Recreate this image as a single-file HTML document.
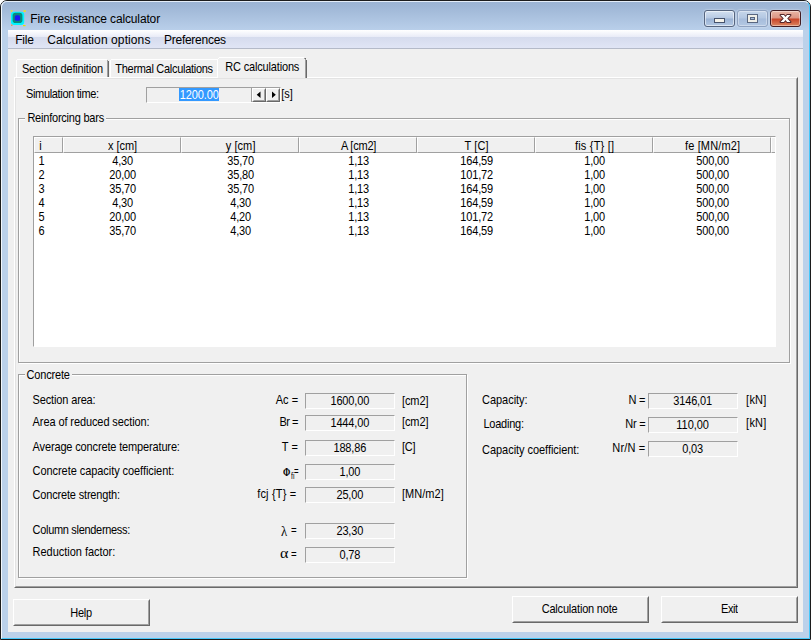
<!DOCTYPE html>
<html><head><meta charset="utf-8"><title>Fire resistance calculator</title>
<style>
*{box-sizing:border-box;margin:0;padding:0}
html,body{width:811px;height:640px;overflow:hidden;background:#fff}
body{position:relative;font-family:"Liberation Sans",sans-serif;font-size:11px;color:#000}
.a{position:absolute;white-space:pre}
#frame{left:0;top:0;width:811px;height:640px;background:#bbd1ea;border:1px solid #1c1c1c;border-radius:7px 7px 0 0}
#tbar{left:1px;top:1px;width:809px;height:29px;background:linear-gradient(to bottom,#9bb3d3 0,#9fb7d6 20%,#b9cfea 100%);border-radius:6px 6px 0 0}
#frame2{left:1px;top:1px;width:809px;height:638px;border:1px solid;border-color:#e4edf8 #45c8fb #45c8fb #f2f7fc;border-radius:6px 6px 0 0}
#client{left:8px;top:30px;width:795px;height:602px;background:#f0f0f0}
#menubar{left:8px;top:30px;width:795px;height:19px;background:linear-gradient(to bottom,#ffffff 0,#e8ebf7 7px,#d5dbed 7px,#e0e5f5 18px,#b4bac8 18px,#b4bac8 19px)}
.seg{font-size:12px;line-height:14px;height:14px}
.t{line-height:13px;height:13px;transform:scaleY(1.09);transform-origin:0 10px}
.box{border:1px solid;border-color:#a0a0a0 #fff #fff #a0a0a0;background:#f0f0f0;height:16px}
.btn{border:1px solid;border-color:#fff #696969 #696969 #fff;background:#f0f0f0}
.btn:after{content:"";position:absolute;left:0;top:0;right:0;bottom:0;border:1px solid;border-color:#f0f0f0 #a0a0a0 #a0a0a0 #f0f0f0}
.hd{top:137px;height:16px;background:#f0f0f0;border:1px solid;border-color:#fff #a0a0a0 #a0a0a0 #fff}
.grp{border:1px solid #a0a0a0;box-shadow:1px 1px 0 #fff, inset 1px 1px 0 #fff}
.cap{border-radius:3px;height:17px;top:10px}
.sym{font-family:"Liberation Serif","DejaVu Serif",serif;font-size:12px}
</style></head><body>
<div id="frame" class="a"></div>
<div id="tbar" class="a"></div>
<div id="frame2" class="a"></div>
<div id="client" class="a"></div>
<div id="menubar" class="a"></div>

<svg class="a" style="left:10px;top:10px" width="17" height="17" viewBox="0 0 17 17"><rect x="1" y="1.700" width="13.200" height="13.300" rx="3" fill="#00f4ff"/><rect x="2.600" y="2.800" width="9.800" height="10.300" rx="2.800" fill="#0b8a7c"/><rect x="4.800" y="5.300" width="5.300" height="5.500" rx="1.600" fill="#1a1af4"/><rect x="0.800" y="0.300" width="1.600" height="1.300" fill="#f4e800"/><rect x="13.500" y="0.300" width="2.300" height="1.500" fill="#f4e800"/><rect x="13" y="15" width="2.500" height="1.200" fill="#e8dc00"/><rect x="1" y="14.500" width="1.500" height="1.500" fill="#d8a060"/></svg>
<div class="a seg" style="left:30.30px;top:12px;letter-spacing:-0.142px">Fire resistance calculator</div>
<div class="a seg" style="left:15.20px;top:33px;letter-spacing:-0.186px">File</div>
<div class="a seg" style="left:47.20px;top:33px;letter-spacing:0.100px">Calculation options</div>
<div class="a seg" style="left:164.00px;top:33px;letter-spacing:-0.264px">Preferences</div>
<div class="a cap" style="left:704px;width:31px;border:1px solid #56657f;background:linear-gradient(#d3e0f0,#b6c9e3 48%,#9ab2d4 52%,#b3c8e3);box-shadow:inset 0 0 0 1px rgba(255,255,255,.55),0 0 2px rgba(255,255,255,.7)"></div>
<div class="a cap" style="left:737px;width:31px;border:1px solid #8fa2c0;background:linear-gradient(#c6d6ea,#b3c7e2 48%,#a6bcdb 52%,#b3c8e3);box-shadow:inset 0 0 0 1px rgba(255,255,255,.35),0 0 2px rgba(255,255,255,.7)"></div>
<div class="a cap" style="left:770px;width:31px;border:1px solid #431c22;background:linear-gradient(#e9b5a6,#dc9584 46%,#c8452a 54%,#dc8560);box-shadow:inset 0 0 0 1px rgba(255,255,255,.4),0 0 2px rgba(255,255,255,.7)"></div>
<svg class="a" style="left:704px;top:10px" width="98" height="17" viewBox="0 0 98 17"><rect x="10.500" y="8.500" width="10" height="4" fill="#f4f2ea" stroke="#46526c"/><rect x="43.500" y="4.500" width="10" height="8" fill="#f0efe8" stroke="#5a6780"/><rect x="46.500" y="7.500" width="4" height="2" fill="#a9bedb" stroke="#5a6780"/><path d="M76.500 5h3.400l1.600 2.100 1.600-2.100h3.400l-3.300 3.500 3.300 3.500h-3.400l-1.600-2.100-1.600 2.100h-3.400l3.300-3.500z" fill="#fff" stroke="#56262a" stroke-width="1.900" stroke-linejoin="round" paint-order="stroke"/></svg>
<div class="a" style="left:14px;top:77px;width:784px;height:511px;border:1px solid;border-color:#fff #696969 #696969 #fff"></div>
<div class="a" style="left:15px;top:78px;width:782px;height:509px;border:1px solid;border-color:#e3e3e3 #a0a0a0 #a0a0a0 #e3e3e3"></div>
<div class="a" style="left:16px;top:60px;width:1px;height:17px;background:#fff"></div>
<div class="a" style="left:17px;top:59px;width:90px;height:1px;background:#fff"></div>
<div class="a" style="left:107px;top:60px;width:1px;height:17px;background:#a0a0a0"></div>
<div class="a" style="left:108px;top:61px;width:1px;height:16px;background:#696969"></div>
<div class="a" style="left:110px;top:60px;width:1px;height:17px;background:#fff"></div>
<div class="a" style="left:111px;top:59px;width:106px;height:1px;background:#fff"></div>
<div class="a" style="left:217px;top:57px;width:90px;height:21px;background:#f0f0f0"></div>
<div class="a" style="left:217px;top:59px;width:1px;height:19px;background:#fff"></div>
<div class="a" style="left:218px;top:58px;width:1px;height:1px;background:#fff"></div>
<div class="a" style="left:219px;top:57px;width:85px;height:1px;background:#fff"></div>
<div class="a" style="left:305px;top:59px;width:1px;height:19px;background:#a0a0a0"></div>
<div class="a" style="left:306px;top:60px;width:1px;height:18px;background:#696969"></div>
<div class="a" style="left:304px;top:58px;width:1px;height:1px;background:#a0a0a0"></div>
<div class="a" style="left:305px;top:58px;width:1px;height:1px;background:#696969"></div>
<div class="a t" style="left:21.90px;top:62.5px;letter-spacing:-0.149px">Section definition</div>
<div class="a t" style="left:115.30px;top:62.5px;letter-spacing:-0.291px">Thermal Calculations</div>
<div class="a t" style="left:225.20px;top:61px;letter-spacing:-0.161px">RC calculations</div>
<div class="a t" style="left:26.00px;top:88px;letter-spacing:-0.342px">Simulation time:</div>
<div class="a box" style="left:146px;top:87px;width:135px;height:16px"></div>
<div class="a" style="left:251px;top:88px;width:1px;height:14px;background:#a0a0a0"></div>
<div class="a" style="left:179px;top:88px;background:#3399ff;width:40px;height:13px"></div>
<div class="a t" style="left:179.80px;top:89px;letter-spacing:-0.109px;color:#fff">1200.00</div>
<div class="a btn" style="left:252px;top:88px;width:14px;height:14px"></div>
<div class="a btn" style="left:266px;top:88px;width:14px;height:14px"></div>
<svg class="a" style="left:251px;top:87px" width="29" height="15" viewBox="0 0 29 15"><path d="M9.500 4.500v6.400l-3.800-3.200z M21 4.500v6.400l3.800-3.200z" fill="#000"/></svg>
<div class="a t" style="left:281.30px;top:88px;letter-spacing:-0.108px">[s]</div>
<div class="a grp" style="left:18px;top:118px;width:772px;height:245px"></div>
<div class="a" style="left:25px;top:116px;width:81px;height:6px;background:#f0f0f0"></div>
<div class="a t" style="left:27.40px;top:112px;letter-spacing:-0.218px">Reinforcing bars</div>
<div class="a" style="left:33px;top:136px;width:743px;height:211px;background:#fff;border:1px solid;border-color:#a0a0a0 #fff #fff #a0a0a0"></div>
<div class="a hd" style="left:34px;width:29px"></div>
<div class="a hd" style="left:63px;width:118px"></div>
<div class="a hd" style="left:181px;width:118px"></div>
<div class="a hd" style="left:299px;width:118px"></div>
<div class="a hd" style="left:417px;width:118px"></div>
<div class="a hd" style="left:535px;width:118px"></div>
<div class="a hd" style="left:653px;width:118px"></div>
<div class="a hd" style="left:771px;width:4px;border-right:0"></div>
<div class="a t" style="left:39.20px;top:140px;letter-spacing:0.147px">i</div>
<div class="a t" style="left:108.05px;top:140px;letter-spacing:-0.041px">x [cm]</div>
<div class="a t" style="left:225.65px;top:140px;letter-spacing:0.093px">y [cm]</div>
<div class="a t" style="left:340.95px;top:140px;letter-spacing:-0.198px">A [cm2]</div>
<div class="a t" style="left:464.40px;top:140px;letter-spacing:0.152px">T [C]</div>
<div class="a t" style="left:574.95px;top:140px;letter-spacing:0.200px">fis {T} []</div>
<div class="a t" style="left:685.00px;top:140px;letter-spacing:0.140px">fe [MN/m2]</div>
<div class="a t" style="left:38.40px;top:155px;letter-spacing:-0.125px">1</div>
<div class="a t" style="left:112.25px;top:155px;letter-spacing:-0.180px">4,30</div>
<div class="a t" style="left:227.25px;top:155px;letter-spacing:-0.166px">35,70</div>
<div class="a t" style="left:348.25px;top:155px;letter-spacing:-0.180px">1,13</div>
<div class="a t" style="left:460.25px;top:155px;letter-spacing:-0.159px">164,59</div>
<div class="a t" style="left:584.25px;top:155px;letter-spacing:-0.180px">1,00</div>
<div class="a t" style="left:696.25px;top:155px;letter-spacing:-0.159px">500,00</div>
<div class="a t" style="left:38.40px;top:169px;letter-spacing:-0.125px">2</div>
<div class="a t" style="left:109.25px;top:169px;letter-spacing:-0.166px">20,00</div>
<div class="a t" style="left:227.25px;top:169px;letter-spacing:-0.166px">35,80</div>
<div class="a t" style="left:348.25px;top:169px;letter-spacing:-0.180px">1,13</div>
<div class="a t" style="left:460.25px;top:169px;letter-spacing:-0.159px">101,72</div>
<div class="a t" style="left:584.25px;top:169px;letter-spacing:-0.180px">1,00</div>
<div class="a t" style="left:696.25px;top:169px;letter-spacing:-0.159px">500,00</div>
<div class="a t" style="left:38.40px;top:183px;letter-spacing:-0.125px">3</div>
<div class="a t" style="left:109.25px;top:183px;letter-spacing:-0.166px">35,70</div>
<div class="a t" style="left:227.25px;top:183px;letter-spacing:-0.166px">35,70</div>
<div class="a t" style="left:348.25px;top:183px;letter-spacing:-0.180px">1,13</div>
<div class="a t" style="left:460.25px;top:183px;letter-spacing:-0.159px">164,59</div>
<div class="a t" style="left:584.25px;top:183px;letter-spacing:-0.180px">1,00</div>
<div class="a t" style="left:696.25px;top:183px;letter-spacing:-0.159px">500,00</div>
<div class="a t" style="left:38.40px;top:197px;letter-spacing:-0.125px">4</div>
<div class="a t" style="left:112.25px;top:197px;letter-spacing:-0.180px">4,30</div>
<div class="a t" style="left:230.25px;top:197px;letter-spacing:-0.180px">4,30</div>
<div class="a t" style="left:348.25px;top:197px;letter-spacing:-0.180px">1,13</div>
<div class="a t" style="left:460.25px;top:197px;letter-spacing:-0.159px">164,59</div>
<div class="a t" style="left:584.25px;top:197px;letter-spacing:-0.180px">1,00</div>
<div class="a t" style="left:696.25px;top:197px;letter-spacing:-0.159px">500,00</div>
<div class="a t" style="left:38.40px;top:211px;letter-spacing:-0.125px">5</div>
<div class="a t" style="left:109.25px;top:211px;letter-spacing:-0.166px">20,00</div>
<div class="a t" style="left:230.25px;top:211px;letter-spacing:-0.180px">4,20</div>
<div class="a t" style="left:348.25px;top:211px;letter-spacing:-0.180px">1,13</div>
<div class="a t" style="left:460.25px;top:211px;letter-spacing:-0.159px">101,72</div>
<div class="a t" style="left:584.25px;top:211px;letter-spacing:-0.180px">1,00</div>
<div class="a t" style="left:696.25px;top:211px;letter-spacing:-0.159px">500,00</div>
<div class="a t" style="left:38.40px;top:225px;letter-spacing:-0.125px">6</div>
<div class="a t" style="left:109.25px;top:225px;letter-spacing:-0.166px">35,70</div>
<div class="a t" style="left:230.25px;top:225px;letter-spacing:-0.180px">4,30</div>
<div class="a t" style="left:348.25px;top:225px;letter-spacing:-0.180px">1,13</div>
<div class="a t" style="left:460.25px;top:225px;letter-spacing:-0.159px">164,59</div>
<div class="a t" style="left:584.25px;top:225px;letter-spacing:-0.180px">1,00</div>
<div class="a t" style="left:696.25px;top:225px;letter-spacing:-0.159px">500,00</div>
<div class="a grp" style="left:18px;top:374px;width:449px;height:204px"></div>
<div class="a" style="left:25px;top:372px;width:47px;height:6px;background:#f0f0f0"></div>
<div class="a t" style="left:26.60px;top:369px;letter-spacing:-0.180px">Concrete</div>
<div class="a t" style="left:32.60px;top:394px;letter-spacing:-0.148px">Section area:</div>
<div class="a box" style="left:305px;top:393px;width:90px"></div>
<div class="a t" style="left:330.45px;top:395px;letter-spacing:-0.152px">1600,00</div>
<div class="a t" style="left:275.70px;top:394px;letter-spacing:0.018px">Ac =</div>
<div class="a t" style="left:402.00px;top:395px;letter-spacing:-0.101px">[cm2]</div>
<div class="a t" style="left:32.60px;top:416px;letter-spacing:-0.098px">Area of reduced section:</div>
<div class="a box" style="left:305px;top:415px;width:90px"></div>
<div class="a t" style="left:330.45px;top:417px;letter-spacing:-0.152px">1444,00</div>
<div class="a t" style="left:279.40px;top:416px;letter-spacing:-0.446px">Br =</div>
<div class="a t" style="left:402.00px;top:416px;letter-spacing:-0.101px">[cm2]</div>
<div class="a t" style="left:32.60px;top:441px;letter-spacing:-0.147px">Average concrete temperature:</div>
<div class="a box" style="left:305px;top:440px;width:90px"></div>
<div class="a t" style="left:333.45px;top:442px;letter-spacing:-0.159px">188,86</div>
<div class="a t" style="left:281.80px;top:441px;letter-spacing:0.095px">T =</div>
<div class="a t" style="left:402.00px;top:441px;letter-spacing:-0.188px">[C]</div>
<div class="a t" style="left:32.60px;top:465px;letter-spacing:-0.063px">Concrete capacity coefficient:</div>
<div class="a box" style="left:305px;top:464px;width:90px"></div>
<div class="a t" style="left:339.45px;top:466px;letter-spacing:-0.180px">1,00</div>
<div class="a t" style="left:32.60px;top:489px;letter-spacing:-0.178px">Concrete strength:</div>
<div class="a box" style="left:305px;top:487px;width:90px"></div>
<div class="a t" style="left:336.45px;top:489px;letter-spacing:-0.166px">25,00</div>
<div class="a t" style="left:257.20px;top:488px;letter-spacing:0.177px">fcj {T} =</div>
<div class="a t" style="left:402.00px;top:488px;letter-spacing:0.034px">[MN/m2]</div>
<div class="a t" style="left:32.60px;top:524px;letter-spacing:-0.313px">Column slenderness:</div>
<div class="a box" style="left:305px;top:523px;width:90px"></div>
<div class="a t" style="left:336.45px;top:525px;letter-spacing:-0.166px">23,30</div>
<div class="a t" style="left:32.60px;top:546px;letter-spacing:-0.027px">Reduction factor:</div>
<div class="a box" style="left:305px;top:547px;width:90px"></div>
<div class="a t" style="left:339.45px;top:549px;letter-spacing:-0.180px">0,78</div>
<div class="a" style="left:282.90px;top:460.58px;font:bold 12px/20px 'Liberation Serif',serif;transform-origin:0 0;transform:scale(0.730,1.087)">&Phi;</div>
<div class="a" style="left:291.00px;top:464.26px;font:normal 8px/20px 'Liberation Sans',serif;transform-origin:0 0;transform:scale(0.850,1.220)">fi</div>
<div class="a" style="left:293.60px;top:461.90px;font:normal 11px/20px 'Liberation Sans',serif;transform-origin:0 0;transform:scale(0.717,0.950)">=</div>
<div class="a" style="left:280.90px;top:520.85px;font:normal 15px/20px 'Liberation Serif',serif;transform-origin:0 0;transform:scale(0.857,1.010)">&lambda;</div>
<div class="a" style="left:291.00px;top:521.20px;font:normal 11px/20px 'Liberation Sans',serif;transform-origin:0 0;transform:scale(0.883,0.950)">=</div>
<div class="a" style="left:279.83px;top:542.67px;font:normal 15px/20px 'Liberation Serif',serif;transform-origin:0 0;transform:scale(1.071,1.029)">&alpha;</div>
<div class="a" style="left:291.00px;top:545.20px;font:normal 11px/20px 'Liberation Sans',serif;transform-origin:0 0;transform:scale(0.883,0.950)">=</div>
<div class="a t" style="left:482.10px;top:394px;letter-spacing:-0.051px">Capacity:</div>
<div class="a box" style="left:648px;top:393px;width:90px"></div>
<div class="a t" style="left:673.25px;top:395px;letter-spacing:-0.152px">3146,01</div>
<div class="a t" style="left:628.40px;top:394px;letter-spacing:-0.146px">N =</div>
<div class="a t" style="left:746.10px;top:394px;letter-spacing:0.234px">[kN]</div>
<div class="a t" style="left:483.40px;top:418px;letter-spacing:-0.227px">Loading:</div>
<div class="a box" style="left:648px;top:417px;width:90px"></div>
<div class="a t" style="left:676.25px;top:419px;letter-spacing:-0.021px">110,00</div>
<div class="a t" style="left:625.20px;top:418px;letter-spacing:-0.223px">Nr =</div>
<div class="a t" style="left:746.10px;top:417px;letter-spacing:0.234px">[kN]</div>
<div class="a t" style="left:482.10px;top:444px;letter-spacing:-0.050px">Capacity coefficient:</div>
<div class="a box" style="left:648px;top:441px;width:90px"></div>
<div class="a t" style="left:682.25px;top:443px;letter-spacing:-0.180px">0,03</div>
<div class="a t" style="left:612.30px;top:442px;letter-spacing:0.168px">Nr/N =</div>
<div class="a btn" style="left:13px;top:599px;width:137px;height:27px"></div>
<div class="a t" style="left:70.30px;top:607px;letter-spacing:-0.306px">Help</div>
<div class="a btn" style="left:512px;top:596px;width:137px;height:27px"></div>
<div class="a t" style="left:541.70px;top:603px;letter-spacing:-0.193px">Calculation note</div>
<div class="a btn" style="left:661px;top:596px;width:137px;height:27px"></div>
<div class="a t" style="left:721.00px;top:603px;letter-spacing:-0.436px">Exit</div>
</body></html>
